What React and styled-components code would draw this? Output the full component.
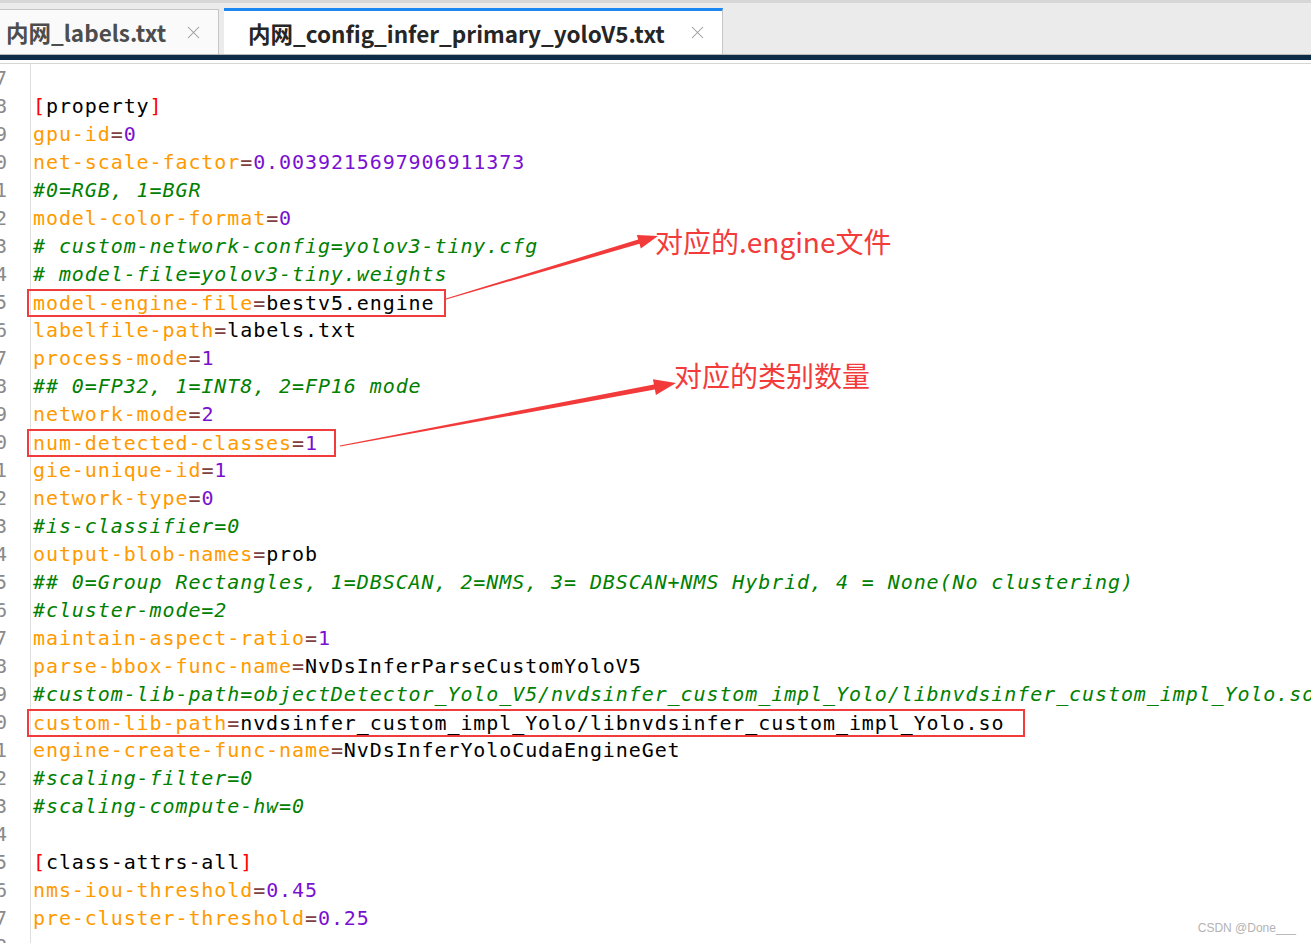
import styled, { createGlobalStyle } from "styled-components";
import { X } from "lucide-react";

const GlobalStyle = createGlobalStyle`
  html, body {
    margin: 0;
    padding: 0;
    background: #ffffff;
    overflow: hidden;
  }
`;

//---file content, line 17 to 48---//
const FIRST_LINE = 17;
const lines = [
  "",
  "[property]",
  "gpu-id=0",
  "net-scale-factor=0.0039215697906911373",
  "#0=RGB, 1=BGR",
  "model-color-format=0",
  "# custom-network-config=yolov3-tiny.cfg",
  "# model-file=yolov3-tiny.weights",
  "model-engine-file=bestv5.engine",
  "labelfile-path=labels.txt",
  "process-mode=1",
  "## 0=FP32, 1=INT8, 2=FP16 mode",
  "network-mode=2",
  "num-detected-classes=1",
  "gie-unique-id=1",
  "network-type=0",
  "#is-classifier=0",
  "output-blob-names=prob",
  "## 0=Group Rectangles, 1=DBSCAN, 2=NMS, 3= DBSCAN+NMS Hybrid, 4 = None(No clustering)",
  "#cluster-mode=2",
  "maintain-aspect-ratio=1",
  "parse-bbox-func-name=NvDsInferParseCustomYoloV5",
  "#custom-lib-path=objectDetector_Yolo_V5/nvdsinfer_custom_impl_Yolo/libnvdsinfer_custom_impl_Yolo.so",
  "custom-lib-path=nvdsinfer_custom_impl_Yolo/libnvdsinfer_custom_impl_Yolo.so",
  "engine-create-func-name=NvDsInferYoloCudaEngineGet",
  "#scaling-filter=0",
  "#scaling-compute-hw=0",
  "",
  "[class-attrs-all]",
  "nms-iou-threshold=0.45",
  "pre-cluster-threshold=0.25",
  "",
];

// line number -> right padding of the red box
const marked = { 25: 9, 30: 16, 40: 19 };

// tapered arrow as a polygon, thin at the start and thick near the head
const arrowPoints = (x1, y1, x2, y2, w0, w1, headLen, headW) => {
  const dx = x2 - x1;
  const dy = y2 - y1;
  const len = Math.hypot(dx, dy);
  const ux = dx / len;
  const uy = dy / len;
  const nx = -uy;
  const ny = ux;
  const bx = x2 - ux * headLen;
  const by = y2 - uy * headLen;
  const pts = [
    [x1 + nx * w0, y1 + ny * w0],
    [bx + nx * w1, by + ny * w1],
    [bx + nx * headW, by + ny * headW],
    [x2, y2],
    [bx - nx * headW, by - ny * headW],
    [bx - nx * w1, by - ny * w1],
    [x1 - nx * w0, y1 - ny * w0],
  ];
  return pts.map((p) => p.map((v) => v.toFixed(1)).join(",")).join(" ");
};

const CodeLine = ({ text }) => {
  if (text.startsWith("#")) return <Comment>{text}</Comment>;
  if (text.startsWith("[")) {
    return (
      <>
        <Bracket>[</Bracket>
        {text.slice(1, -1)}
        <Bracket>]</Bracket>
      </>
    );
  }
  const i = text.indexOf("=");
  if (i < 0) return text;
  const value = text.slice(i + 1);
  return (
    <>
      <Key>{text.slice(0, i)}</Key>
      <Equals>=</Equals>
      {/^[\d.]+$/.test(value) ? <Num>{value}</Num> : value}
    </>
  );
};

//-----------------------------//
//---Editor screenshot---------//
//-----------------------------//
const App = () => {
  return (
    <Page>
      <GlobalStyle />
      <TabBar>
        <Tab>
          内网_labels.txt
          <Close>
            <X size={21} strokeWidth={1.2} />
          </Close>
        </Tab>
        <Tab $active>
          内网_config_infer_primary_yoloV5.txt
          <Close>
            <X size={21} strokeWidth={1.2} />
          </Close>
        </Tab>
      </TabBar>
      <NavyBar />
      <Separator />
      <Editor>
        {lines.map((text, idx) => {
          const n = FIRST_LINE + idx;
          return (
            <Row key={n}>
              <Gutter>{n}</Gutter>
              <Code>
                {marked[n] ? (
                  <Marked $padRight={marked[n]}>
                    <CodeLine text={text} />
                  </Marked>
                ) : (
                  <CodeLine text={text} />
                )}
              </Code>
            </Row>
          );
        })}
      </Editor>

      <Arrows width="1311" height="943">
        <polygon
          points={arrowPoints(446, 299, 658, 236, 0.5, 2.2, 20, 7)}
          fill="#f23a3a"
        />
        <polygon
          points={arrowPoints(340, 446, 676, 383, 0.6, 2.6, 22, 8)}
          fill="#f23a3a"
        />
      </Arrows>
      <Label $left={655} $top={224}>
        对应的.engine文件
      </Label>
      <Label $left={674} $top={358}>
        对应的类别数量
      </Label>
      <Watermark>CSDN @Done___</Watermark>
    </Page>
  );
};

export default App;

const Page = styled.div`
  position: relative;
  width: 1311px;
  height: 943px;
  overflow: hidden;
  background: #ffffff;
`;

const TabBar = styled.div`
  display: flex;
  align-items: flex-end;
  gap: 5px;
  height: 51px;
  background: #ebebeb;
  border-top: 3px solid #d7d7d7;
`;

const Tab = styled.div`
  display: flex;
  align-items: center;
  box-sizing: border-box;
  height: ${(p) => (p.$active ? "46px" : "45px")};
  width: ${(p) => (p.$active ? "499px" : "221px")};
  padding-left: ${(p) => (p.$active ? "24px" : "7px")};
  background: ${(p) => (p.$active ? "#ffffff" : "#fafafa")};
  border: 1px solid #c6c6c6;
  border-bottom: none;
  border-left: ${(p) => (p.$active ? "none" : "1px solid #c6c6c6")};
  border-top: ${(p) => (p.$active ? "3px solid #1a88f0" : "1px solid #c6c6c6")};
  font-family: "Noto Sans CJK SC", "Noto Sans", sans-serif;
  font-weight: 700;
  font-size: 22.5px;
  color: ${(p) => (p.$active ? "#262626" : "#4d4d4d")};
  white-space: nowrap;
  margin-left: ${(p) => (p.$active ? "0" : "-2px")};
`;

const Close = styled.span`
  display: flex;
  align-items: center;
  margin-left: auto;
  margin-right: 14px;
  color: #9a9a9a;
`;

const NavyBar = styled.div`
  height: 5px;
  background: #0c2c47;
  border-top: 1px solid #b8b8b8;
`;

const Separator = styled.div`
  height: 3px;
  background: #ffffff;
  border-bottom: 1px solid #d6d6d6;
`;

const Editor = styled.div`
  display: flex;
  flex-direction: column;
`;

const Row = styled.div`
  display: flex;
  height: 28px;
  line-height: 28px;
  font-family: "DejaVu Sans Mono", "Liberation Mono", monospace;
  font-size: 20px;
  white-space: pre;
`;

const Gutter = styled.div`
  flex: 0 0 31px;
  box-sizing: border-box;
  overflow: hidden;
  direction: rtl;
  padding-right: 23px;
  border-right: 1px solid #dedede;
  color: #8a8a8a;
`;

const Code = styled.div`
  padding-left: 2px;
  letter-spacing: 0.91px;
  color: #000000;
`;

const Marked = styled.span`
  display: inline-block;
  box-sizing: border-box;
  height: 28px;
  line-height: 24px;
  margin-left: -6px;
  padding-left: 4px;
  padding-right: ${(p) => p.$padRight}px;
  border: 2px solid #f03c3c;
  transform: translateY(1px);
`;

const Comment = styled.span`
  color: #008000;
  font-style: italic;
`;

const Bracket = styled.span`
  color: #ff0000;
`;

const Key = styled.span`
  color: #ff9a00;
`;

const Equals = styled.span`
  color: #804040;
`;

const Num = styled.span`
  color: #7a10d0;
`;

const Arrows = styled.svg`
  position: absolute;
  left: 0;
  top: 0;
  pointer-events: none;
`;

const Label = styled.div`
  position: absolute;
  left: ${(p) => p.$left}px;
  top: ${(p) => p.$top}px;
  font-family: "Noto Sans CJK SC", "Noto Sans", sans-serif;
  font-size: 28px;
  line-height: 34px;
  color: #f33b3b;
  white-space: nowrap;
`;

const Watermark = styled.div`
  position: absolute;
  right: 15px;
  bottom: 8px;
  font-family: "Liberation Sans", Arial, sans-serif;
  font-size: 12px;
  color: #b3b3b3;
`;
